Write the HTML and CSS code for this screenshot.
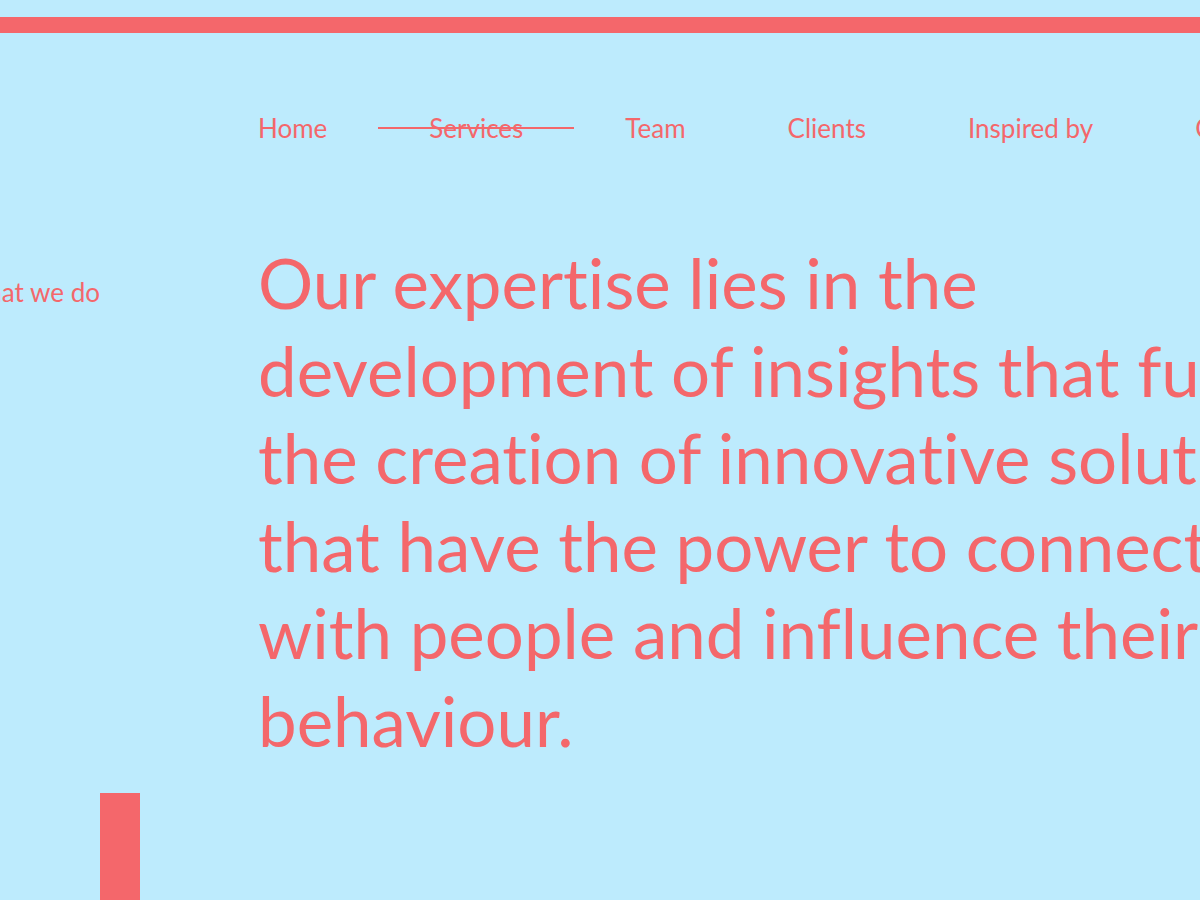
FILE: index.html
```html
<!DOCTYPE html>
<html lang="en">
<head>
<meta charset="utf-8">
<title>What we do</title>
<link rel="stylesheet" href="styles.css">
</head>
<body>
<div class="topbar"></div>
<header class="header">
  <nav class="nav">
    <a class="nav-item" href="#">Home</a>
    <a class="nav-item active" href="#">Services</a>
    <a class="nav-item" href="#">Team</a>
    <a class="nav-item" href="#">Clients</a>
    <a class="nav-item" href="#">Inspired by</a>
    <a class="nav-item" href="#">Contact</a>
  </nav>
</header>
<main class="section">
  <div class="label"><span>What we do</span></div>
  <h1 class="headline">Our expertise lies in the<br>development of insights that fuel<br>the creation of innovative solutions<br>that have the power to connect<br>with people and influence their<br>behaviour.</h1>
</main>
<div class="bar"></div>
</body>
</html>
```
FILE: styles.css
```css
html, body {
  margin: 0;
  padding: 0;
  background: #bdebfd;
  overflow: hidden;
  height: 100%;
}
body {
  font-family: Lato, "Noto Sans", sans-serif;
  font-variant-ligatures: none;
  color: #f4676b;
}
.topbar {
  margin-top: 17px;
  height: 16px;
  background: #f4676b;
}
.header {
  padding: 78px 0 0 258px;
}
.nav {
  display: flex;
  gap: 102px;
  white-space: nowrap;
}
.nav-item {
  position: relative;
  color: #f4676b;
  text-decoration: none;
  font-size: 26px;
  line-height: 34px;
}
.nav-item.active::before {
  content: "";
  position: absolute;
  left: -51px;
  right: -51px;
  top: 16px;
  height: 2px;
  background: #f4676b;
}
.section {
  display: grid;
  grid-template-columns: 100px 158px 1fr;
  margin-top: 94px;
}
.label {
  grid-column: 1;
  display: flex;
  justify-content: flex-end;
  white-space: nowrap;
  font-size: 26px;
  line-height: 34px;
  padding-top: 36px;
}
.headline {
  grid-column: 3;
  margin: 0;
  font-weight: 400;
  font-size: 69px;
  line-height: 87.6px;
  white-space: nowrap;
}
.bar {
  margin: 28px 0 0 100px;
  width: 40px;
  height: 200px;
  background: #f4676b;
}
```
